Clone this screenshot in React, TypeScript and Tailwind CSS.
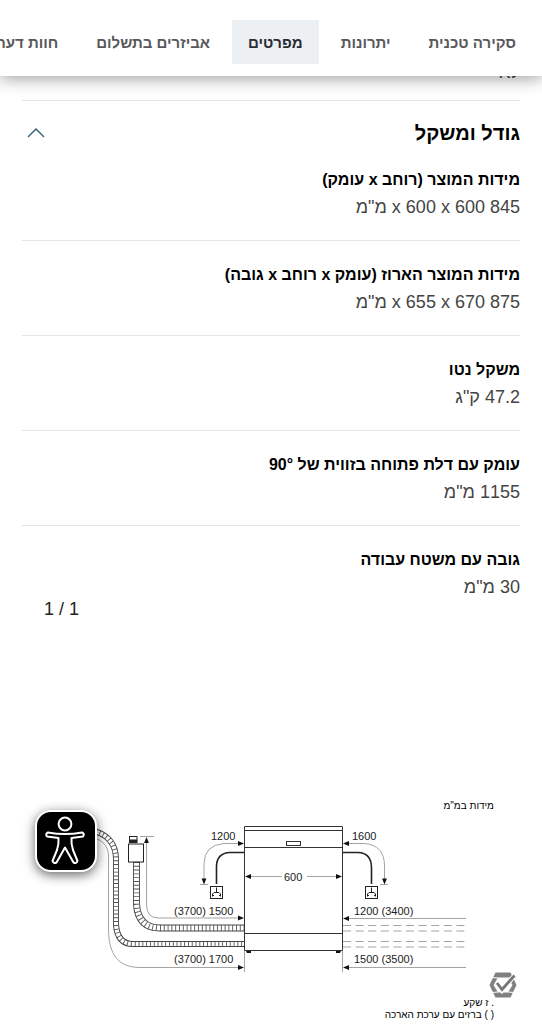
import * as React from "react";
import { clsx } from "clsx";

type Tab = { label: string; active?: boolean };
type Spec = { label: string; value: string };

const tabs: Tab[] = [
  { label: "סקירה טכנית" },
  { label: "יתרונות" },
  { label: "מפרטים", active: true },
  { label: "אביזרים בתשלום" },
  { label: "חוות דעת" },
];

const specs: Spec[] = [
  { label: "מידות המוצר (רוחב x עומק)", value: '845 x 600 x 600 מ"מ' },
  { label: "מידות המוצר הארוז (עומק x רוחב x גובה)", value: '875 x 655 x 670 מ"מ' },
  { label: "משקל נטו", value: '47.2 ק"ג' },
  { label: "עומק עם דלת פתוחה בזווית של 90°", value: '1155 מ"מ' },
  { label: "גובה עם משטח עבודה", value: '30 מ"מ' },
];

function TabBar() {
  return (
    <header className="relative z-10 overflow-hidden bg-white pt-5 pb-3">
      <nav className="flex gap-[6px] ps-[10px]">
        {tabs.map((tab) => (
          <a
            key={tab.label}
            href="#"
            className={clsx(
              "flex h-11 shrink-0 items-center whitespace-nowrap px-4 pt-[2px] text-[15px] font-bold",
              tab.active ? "bg-[#ecf0f2] text-[#2b2b33]" : "text-[#58585c]"
            )}
          >
            {tab.label}
          </a>
        ))}
      </nav>
    </header>
  );
}

// Ribbed hose: dark outline, light core, short ribs across
function Hose({ d, width }: { d: string; width: number }) {
  return (
    <g fill="none">
      <path d={d} stroke="#444" strokeWidth={width} />
      <path d={d} stroke="#fff" strokeWidth={width - 1.8} />
      <path d={d} stroke="#555" strokeWidth={width - 1} strokeDasharray="0.9 2.9" />
    </g>
  );
}

function Arrow({ x, y, angle = 0 }: { x: number; y: number; angle?: number }) {
  return (
    <path d="M0 0 L-6 -2.4 V2.4 Z" fill="#111" transform={`translate(${x} ${y}) rotate(${angle})`} />
  );
}

function Socket({ x, y }: { x: number; y: number }) {
  return (
    <g transform={`translate(${x} ${y})`} fill="none" stroke="#222">
      <rect x="0.5" y="0.5" width="12" height="12" fill="#fff" />
      <path d="M6.5 1.5 V6 M2.5 10.5 V8 L4 6.5 H9 L10.5 8 V10.5 M2.5 9.5 H4 M9 9.5 H10.5" />
    </g>
  );
}

function InstallationDrawing() {
  return (
    <svg
      viewBox="22 815 498 160"
      className="block w-full"
      role="img"
      aria-label="מידות התקנה"
      direction="ltr"
    >
      {/* hoses */}
      <Hose d="M92 831 C107 833 116 844 116 859 V924 Q117 944 133 944 H245" width={6} />
      <Hose d="M136.5 862 V904 Q138 928 160 928 H245" width={7} />

      {/* tap connector */}
      <rect x="129.5" y="836.5" width="7.5" height="3.5" fill="#fff" stroke="#222" />
      <rect x="129" y="840" width="8.5" height="3" fill="#222" />
      <rect x="128.5" y="844" width="15" height="18" fill="#fff" stroke="#222" />

      {/* dimension lines */}
      <g fill="none" stroke="#9a9a9a" strokeWidth="0.9">
        <path d="M92 838 C102 839 108.5 846 108.5 856 V929 C108.5 954 118 967.5 140 967.5 H240" />
        <path d="M140 836.5 H154 M146.5 838 V905 Q147 918 158 918 H240" />
        <path d="M240 843.5 H224 Q204 845 204 864 V882 M200 884.5 H208" />
        <path d="M346 843.5 H364 Q384.5 845 384.5 866 V882 M380 884.5 H388" />
        <path d="M248 876.5 H282 M307 876.5 H340" />
        <path d="M346 918.5 H466 M346 967.5 H466" />
        <path d="M244.5 951 V972 M342.5 951 V972" />
        <path d="M343 925.5 H466 M343 931 H466 M343 941.5 H466 M343 947 H466" strokeDasharray="8 4.6" />
      </g>

      {/* power cables */}
      <g fill="none" stroke="#222" strokeWidth="1.6">
        <path d="M245 852.5 H230 Q216.5 853 216.5 867 V884" />
        <path d="M342 852.5 H358 Q371.5 853 371.5 868 V884" />
      </g>
      <Socket x={210} y={886} />
      <Socket x={365} y={886} />

      {/* appliance */}
      <g fill="none" stroke="#333">
        <path d="M244.5 826.5 H342.5 V950.5 H244.5 Z" />
        <path d="M244.5 830.5 H342.5 M244.5 847.5 H342.5 M244.5 933.5 H342.5" />
        <rect x="286.5" y="841.5" width="14" height="4" />
      </g>
      <path d="M246 951 H251 V953 H247 Z M336 951 H341 L340 953 H336 Z" fill="#111" />

      <Arrow x={244} y={843.5} />
      <Arrow x={244} y={918} />
      <Arrow x={244} y={967.5} />
      <Arrow x={342} y={876.5} />
      <Arrow x={245} y={876.5} angle={180} />
      <Arrow x={343} y={843.5} angle={180} />
      <Arrow x={343} y={918.5} angle={180} />
      <Arrow x={343} y={967.5} angle={180} />
      <Arrow x={204} y={884.5} angle={90} />
      <Arrow x={384.5} y={884.5} angle={90} />
      <Arrow x={146.5} y={837} angle={-90} />

      <g fill="#222" fontSize="11" fontFamily="Liberation Sans, Arial, sans-serif">
        <text x="211" y="840">1200</text>
        <text x="352" y="840">1600</text>
        <text x="284" y="881">600</text>
        <text x="174" y="915">(3700) 1500</text>
        <text x="174" y="963">(3700) 1700</text>
        <text x="354" y="915">1200 (3400)</text>
        <text x="354" y="963">1500 (3500)</text>
      </g>
    </svg>
  );
}

function AccessibilityButton() {
  return (
    <button
      type="button"
      aria-label="נגישות"
      className="fixed bottom-[152px] left-[35px] z-20 size-[62px] rounded-2xl border-2 border-white bg-black shadow-[0_3px_12px_rgba(0,0,0,0.6)]"
    >
      <svg viewBox="2 2 58 58" fill="none" stroke="#fff" strokeWidth="2" strokeLinejoin="round">
        <circle cx="30" cy="14" r="6.4" />
        <path d="M13 22.5 C24 24.5 36 24.5 47 22.5 Q50 24 48 26.5 L36.5 28 Q36 34 38 40 L42.5 51 Q41.5 54 38.5 52.5 L30 37.5 L21.5 52.5 Q18.5 54 17.5 51 L22 40 Q24 34 23.5 28 L12 26.5 Q10 24 13 22.5 Z" />
      </svg>
    </button>
  );
}

function TrustSeal() {
  return (
    <svg viewBox="0 0 28 26" className="fixed right-[25px] bottom-[26px] z-20 h-[26px] w-7" aria-hidden="true">
      <path d="M6.5 0.5 H21.5 L27.5 13 L21.5 25.5 H6.5 L0.5 13 Z" fill="#808080" />
      <path d="M9 5.5 H19 L23.5 13 L19 20.5 H9 L4.5 13 Z" fill="#fff" />
      <path d="M3 5.5 L9 6 M25 5.5 L19 6 M3 20.5 L9 20 M25 20.5 L19 20" stroke="#fff" strokeWidth="1" />
      <path d="M8 11.5 L13 18.5 L25 4" fill="none" stroke="#fff" strokeWidth="4.6" />
      <path d="M8 11 L13 17.5 L25.5 3.5" fill="none" stroke="#777" strokeWidth="2.8" />
    </svg>
  );
}

export default function App() {
  return (
    <div
      dir="rtl"
      className="min-h-screen overflow-hidden bg-white font-['Liberation_Sans',sans-serif] text-black"
    >
      <div className="relative z-10 shadow-[0_2px_16px_rgba(0,0,0,0.4)]">
        <TabBar />
      </div>

      <main className="px-[22px]">
        {/* tail of the previous section, scrolled under the tab bar */}
        <p className="-mt-[14px] h-[39px] border-b border-[#e3e5e6] text-lg leading-5 text-[#444]">לא</p>

        <section>
          <button type="button" className="mb-[3px] flex h-16 w-full items-center justify-between">
            <h2 className="text-xl font-bold">גודל ומשקל</h2>
            <svg viewBox="0 0 18 10" className="me-[5px] h-[10px] w-[18px]" fill="none" stroke="#3c6478" strokeWidth="1.5">
              <path d="M1 9 L9 1 L17 9" />
            </svg>
          </button>

          <dl>
            {specs.map((spec) => (
              <div key={spec.label} className="mb-[22px] border-b border-[#e3e5e6] pb-[21px] last:mb-0 last:border-0 last:pb-0">
                <dt className="text-base leading-6 font-bold">{spec.label}</dt>
                <dd className="pt-[3px] text-lg leading-6 text-[#444]">{spec.value}</dd>
              </div>
            ))}
          </dl>
        </section>

        <figure>
          <p dir="ltr" className="ps-[22px] text-lg leading-5 text-[#222]">1 / 1</p>
          <p className="mt-[177px] ps-[26px] text-[10px] leading-[19px]">מידות במ"מ</p>
          <InstallationDrawing />
          <figcaption className="ps-[26px] pt-[22px] text-[10px] leading-3">
            <p>. ז שקע</p>
            <p>( ) ברזים עם ערכת הארכה</p>
          </figcaption>
        </figure>
      </main>

      <AccessibilityButton />
      <TrustSeal />
    </div>
  );
}
